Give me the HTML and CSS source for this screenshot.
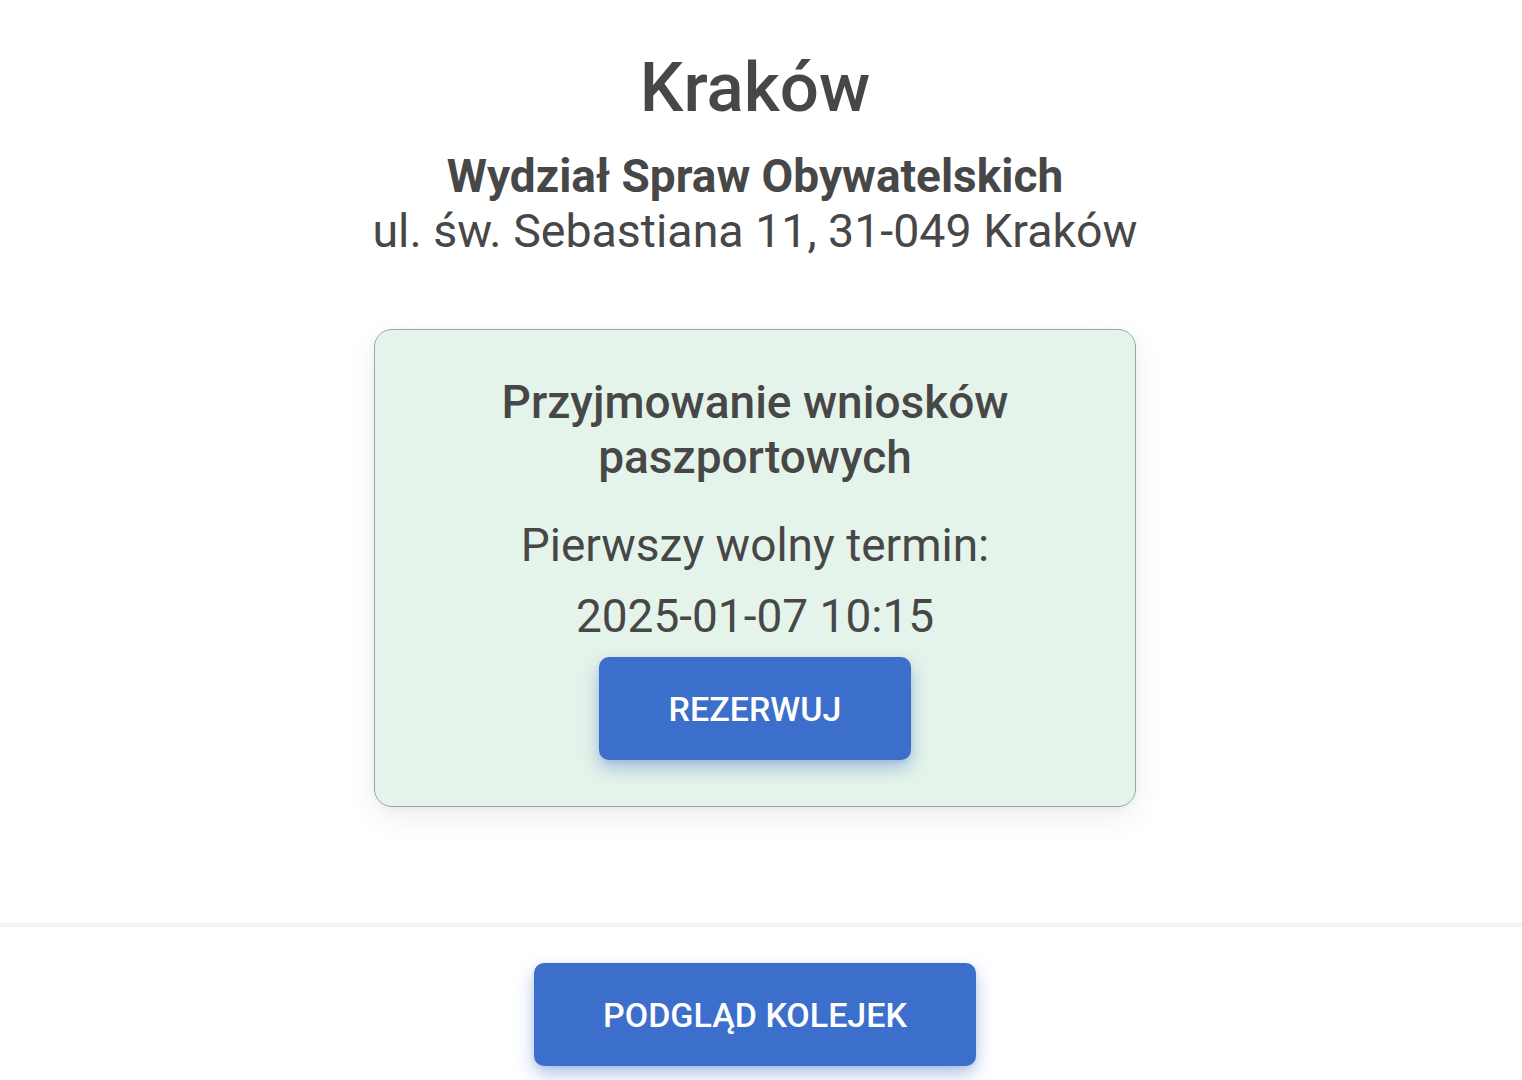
FILE: index.html
```html
<!DOCTYPE html>
<html lang="pl">
<head>
<meta charset="utf-8">
<title>Kraków – Wydział Spraw Obywatelskich</title>
<link rel="stylesheet" href="styles.css">
</head>
<body>
<main class="page">
  <section class="office">
    <h1 class="city">Kraków</h1>
    <p class="office-info">
      <strong class="office-name">Wydział Spraw Obywatelskich</strong>
      <span class="office-address">ul. św. Sebastiana 11, 31-049 Kraków</span>
    </p>
    <div class="card">
      <h2 class="card-title">Przyjmowanie wniosków<br>paszportowych</h2>
      <p class="card-label">Pierwszy wolny termin:</p>
      <p class="card-date">2025-01-07 10:15</p>
      <button class="btn" type="button">Rezerwuj</button>
    </div>
  </section>
  <hr class="divider">
  <div class="footer">
    <button class="btn" type="button">Podgląd kolejek</button>
  </div>
</main>
</body>
</html>
```

FILE: styles.css
```css
html, body {
  margin: 0;
  padding: 0;
  background: #ffffff;
}

body {
  font-family: Roboto, "Liberation Sans", Arial, sans-serif;
  color: #474747;
}

.page {
  display: flex;
  flex-direction: column;
  min-height: 1080px;
}

.office {
  display: flex;
  flex-direction: column;
  align-items: center;
  padding: 46px 12px 0 0;
}

.city {
  margin: 0;
  font-size: 69px;
  line-height: 83px;
  font-weight: 500;
  text-align: center;
}

.office-info {
  margin: 20px 0 0;
  display: flex;
  flex-direction: column;
  align-items: center;
  font-size: 46px;
  line-height: 55px;
  text-align: center;
}

.office-name {
  font-weight: 700;
}

.office-address {
  font-weight: 400;
  font-size: 46.5px;
}

.card {
  box-sizing: border-box;
  width: 762px;
  margin-top: 70px;
  padding: 45px 20px 46px;
  display: flex;
  flex-direction: column;
  align-items: center;
  background: #e5f4ea;
  border: 1px solid #9ea6a6;
  border-radius: 18px;
  box-shadow: 0 10px 30px rgba(0, 0, 0, 0.07), 0 2px 6px rgba(0, 0, 0, 0.04);
  text-align: center;
}

.card-title {
  margin: 0;
  font-size: 46px;
  line-height: 55px;
  font-weight: 500;
}

.card-label {
  margin: 33px 0 0;
  font-size: 46px;
  line-height: 55px;
  font-weight: 400;
}

.card-date {
  margin: 16px 0 0;
  font-size: 46px;
  line-height: 55px;
  font-weight: 400;
}

.btn {
  box-sizing: border-box;
  margin-top: 13px;
  height: 103px;
  padding: 0 69.5px;
  border: none;
  border-radius: 10px;
  background: #3c6fcb;
  color: #ffffff;
  font-family: Roboto, "Liberation Sans", Arial, sans-serif;
  font-size: 34px;
  font-weight: 500;
  text-transform: uppercase;
  box-shadow: 0 8px 18px rgba(60, 111, 203, 0.4), 0 2px 4px rgba(0, 0, 0, 0.08);
  cursor: pointer;
}

.divider {
  margin: 116px 0 0;
  height: 4px;
  border: none;
  background: #f2f2f2;
}

.footer {
  display: flex;
  justify-content: center;
  padding: 36px 12px 0 0;
}

.footer .btn {
  margin-top: 0;
}
```
